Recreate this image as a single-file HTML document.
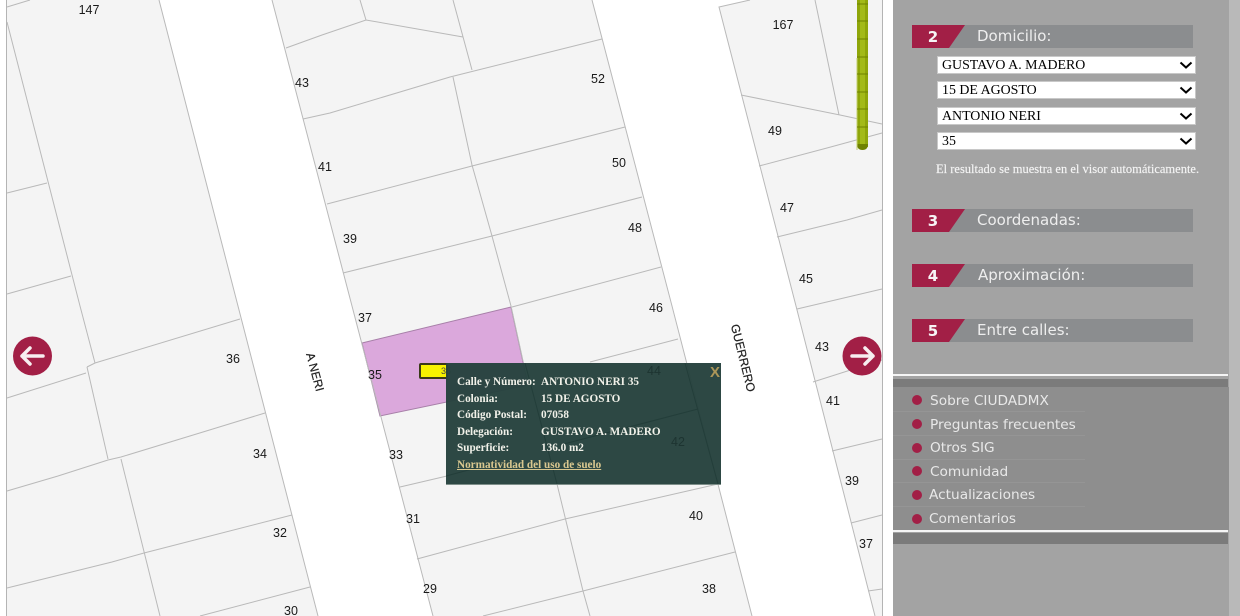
<!DOCTYPE html>
<html lang="es"><head><meta charset="utf-8"><title>CIUDADMX</title>
<style>
html,body{margin:0;padding:0;background:#fff}
body{width:1240px;height:616px;overflow:hidden;position:relative}
#map{position:absolute;left:0;top:0}
.side{position:absolute;left:893px;top:0;width:336px;height:616px;background:#a3a3a3}
.rt{position:absolute;left:1229px;top:0;width:11px;height:616px;background:#b9b9b9}
.abs{position:absolute}
.hd{position:absolute;left:912px;width:281px;height:23px;background:#8b8d8f}
.hd svg{position:absolute;left:0;top:0}
.hd b{position:absolute;left:0;width:42px;text-align:center;top:3px;font:bold 15px/18px "DejaVu Sans",sans-serif;color:#f7f3f5}
.hd span{position:absolute;left:65px;top:2px;font:15px/18px "DejaVu Sans",sans-serif;color:#eeeeee;white-space:nowrap}
.sel{position:absolute;left:937px;width:259px;height:18px;background:#fff;outline:1px solid #c8c8c8;outline-offset:-1px}
.sel select{appearance:none;-webkit-appearance:none;border:0;background:transparent;width:100%;height:18px;padding:1px 0 0 5px;margin:0;font:13.9px/17px "Liberation Serif",serif;color:#000;display:block;box-sizing:border-box}
.sel svg{position:absolute;right:3px;top:5px}
.note{position:absolute;left:936px;top:161px;font:12.5px/16px "Liberation Serif",serif;color:#f4f4f4;white-space:nowrap;-webkit-text-stroke:.15px #f4f4f4}
.menu{position:absolute;left:893px;top:387px;width:336px;height:143px;background:#8e8e8e}
.strip{position:absolute;left:893px;width:335px;background:#7b7b7b}
.wl{position:absolute;left:893px;width:335px;height:2px;background:#f5f5f5}
.dot{position:absolute;left:912px;width:10px;height:10px;border-radius:50%;background:#a21f46}
.mi{position:absolute;font:13.7px/18px "DejaVu Sans",sans-serif;color:#e8e8e8;white-space:nowrap}
.sep{position:absolute;left:893px;width:192px;height:1px;background:#959595}
.pop{position:absolute;left:446px;top:363px;width:275px;height:122px;background:rgba(38,66,62,.97);border-bottom:1px solid #7e8f8a;box-sizing:border-box}
.pop div{position:absolute;font:bold 11.2px/14px "Liberation Serif",serif;color:#f1f1e9;white-space:nowrap}
.pop a{color:#d9c78f;text-decoration:underline}
</style></head>
<body>
<svg id="map" width="893" height="616" viewBox="0 0 893 616" xmlns="http://www.w3.org/2000/svg">
<rect width="893" height="616" fill="#fff"/>
<g fill="#f4f4f4">
<polygon points="7,0 159,0 318,616 7,616"/>
<polygon points="272,0 592,0 752,616 433,616"/>
<polygon points="750,0 719,7 875,616 882,616 882,0"/>
</g>
<polygon points="362,343 511,307 528,385 380,416" fill="#dba8dc" stroke="#a77fa8" stroke-width="1"/>
<g fill="none" stroke="#b9b9b9" stroke-width="1">
<path d="M159,0L318,616M272,0L352,306L433,616M592,0L672,306L752,616M750,0L719,7L796,306L875,616"/>
<path d="M7,7L30,0M7,22L80,306L95,363M87,367L108,459M121,459L160,616"/>
<path d="M7,193L47,183M7,294L71,276M95,363L87,367M95,363L240,319M7,398L86,373M7,491L58,476L108,460L121,457L203,432L265,413M7,588L112,562L144,553L292,515M200,616L310,587"/>
<path d="M360,0L366,20M286,48L322,35L366,20L463,37M453,0L472,70M303,119L330,113L450,77L602,39M453,77L472,165L492,236L511,306L523,361M557,484L583,591L590,616"/>
<path d="M327,204L472,166L625,127M343,273L492,236L642,197M512,307L661,267M590,362L678,339M400,487L447,476M417,559L565,519L718,484M483,616L583,591L735,552"/>
<path d="M815,0L839,115M741,95L840,115L882,124M759,166L827,148L882,133M777,237L847,220L882,210M797,309L882,289M813,382L882,360M832,451L882,439M851,523L882,515M868,591L882,589"/>
</g>
<path d="M6.5,0V616M882.5,0V616" stroke="#b4b4b4" stroke-width="1"/>
<g font-family="Liberation Sans, sans-serif" font-size="12.5" fill="#1a1a1a" text-anchor="middle">
<text x="89" y="14">147</text><text x="302" y="87">43</text><text x="325" y="171">41</text><text x="350" y="243">39</text><text x="365" y="322">37</text><text x="375" y="379">35</text><text x="396" y="459">33</text><text x="413" y="523">31</text><text x="430" y="593">29</text>
<text x="598" y="83">52</text><text x="619" y="167">50</text><text x="635" y="232">48</text><text x="656" y="312">46</text><text x="696" y="520">40</text><text x="709" y="593">38</text>
<text x="233" y="363">36</text><text x="260" y="458">34</text><text x="280" y="537">32</text><text x="291" y="615">30</text>
<text x="783" y="29">167</text><text x="775" y="135">49</text><text x="787" y="212">47</text><text x="806" y="283">45</text><text x="822" y="351">43</text><text x="833" y="405">41</text><text x="852" y="485">39</text><text x="866" y="548">37</text>
<text transform="translate(315,372) rotate(75)" y="4" font-size="12" fill="#222" stroke="#222" stroke-width=".2">A NERI</text>
<text transform="translate(743,358) rotate(76)" y="4" font-size="12" fill="#222" stroke="#222" stroke-width=".2">GUERRERO</text>
</g>
<!-- zoom bar -->
<rect x="857" y="0" width="11" height="147" fill="#8fa60a"/>
<rect x="860" y="0" width="5" height="147" fill="#a3ba18"/>
<path d="M857,144Q857,150 862.500,150Q868,150 868,144Z" fill="#6f8200"/>
<rect x="856.500" y="58" width="1" height="92" fill="#c3d070"/>
<path d="M857,4H868M857,21H868M857,39H868M857,57H868M857,74H868M857,92H868M857,109H868M857,127H868" stroke="#6f8200" stroke-width="1"/>
<!-- arrows -->
<circle cx="32.500" cy="356" r="19.500" fill="#a21f46"/>
<path d="M43,356H22M30,348L22,356L30,364" fill="none" stroke="#f7eef0" stroke-width="3.500" stroke-linecap="round" stroke-linejoin="round"/>
<circle cx="862" cy="356" r="19.500" fill="#a21f46"/>
<path d="M852,356H873M865,348L873,356L865,364" fill="none" stroke="#f7eef0" stroke-width="3.500" stroke-linecap="round" stroke-linejoin="round"/>
<!-- tag -->
<rect x="420" y="364" width="27" height="14" rx="1" fill="#f7f200" stroke="#3a3a18" stroke-width="2"/>
<text x="441" y="374" font-family="Liberation Sans, sans-serif" font-size="9" fill="#444">35</text>
</svg>

<div class="pop">
<svg class="abs" style="left:0;top:0" width="275" height="121" fill="none" stroke="#233e3a" stroke-width="1"><path d="M79,0L111,121M239,0L272,121M252,46L114,82M0,113L30,105"/></svg>
<svg class="abs" style="left:0;top:0" width="275" height="121"><text x="208" y="12" font-family="Liberation Sans,sans-serif" font-size="12.500" fill="#1d3431" text-anchor="middle">44</text><text x="232" y="83" font-family="Liberation Sans,sans-serif" font-size="12.500" fill="#1d3431" text-anchor="middle">42</text></svg>
<div style="left:11px;top:12px">Calle y Número:</div><div style="left:95px;top:12px">ANTONIO NERI 35</div>
<div style="left:11px;top:29px">Colonia:</div><div style="left:95px;top:29px">15 DE AGOSTO</div>
<div style="left:11px;top:45px">Código Postal:</div><div style="left:95px;top:45px">07058</div>
<div style="left:11px;top:62px">Delegación:</div><div style="left:95px;top:62px">GUSTAVO A. MADERO</div>
<div style="left:11px;top:78px">Superficie:</div><div style="left:95px;top:78px">136.0 m2</div>
<div style="left:11px;top:95px"><a href="#">Normatividad del uso de suelo</a></div>
<div style="left:264px;top:2px;font:bold 15px/15px 'Liberation Sans',sans-serif;color:#ad9759">X</div>
</div>

<div class="side"></div><div class="rt"></div>

<div class="hd" style="top:25px"><svg width="54" height="23"><polygon points="0,0 53,0 37,23 0,23" fill="#a21f46"/></svg><b>2</b><span>Domicilio:</span></div>
<div class="sel" style="top:55.500px"><select><option>GUSTAVO A. MADERO</option></select><svg width="14" height="8"><path d="M1.500,1.500L7,6.500L12.500,1.500" fill="none" stroke="#000" stroke-width="2"/></svg></div>
<div class="sel" style="top:80.500px"><select><option>15 DE AGOSTO</option></select><svg width="14" height="8"><path d="M1.500,1.500L7,6.500L12.500,1.500" fill="none" stroke="#000" stroke-width="2"/></svg></div>
<div class="sel" style="top:106.500px"><select><option>ANTONIO NERI</option></select><svg width="14" height="8"><path d="M1.500,1.500L7,6.500L12.500,1.500" fill="none" stroke="#000" stroke-width="2"/></svg></div>
<div class="sel" style="top:131.500px"><select><option>35</option></select><svg width="14" height="8"><path d="M1.500,1.500L7,6.500L12.500,1.500" fill="none" stroke="#000" stroke-width="2"/></svg></div>
<div class="note">El resultado se muestra en el visor automáticamente.</div>

<div class="hd" style="top:209px"><svg width="54" height="23"><polygon points="0,0 53,0 37,23 0,23" fill="#a21f46"/></svg><b>3</b><span>Coordenadas:</span></div>
<div class="hd" style="top:264px"><svg width="54" height="23"><polygon points="0,0 53,0 37,23 0,23" fill="#a21f46"/></svg><b>4</b><span style="left:66px">Aproximación:</span></div>
<div class="hd" style="top:319px"><svg width="54" height="23"><polygon points="0,0 53,0 37,23 0,23" fill="#a21f46"/></svg><b>5</b><span>Entre calles:</span></div>

<div class="wl" style="top:374px"></div>
<div class="strip" style="top:379px;height:8px"></div>
<div class="menu"></div>
<div class="sep" style="top:411px"></div><div class="sep" style="top:435px"></div><div class="sep" style="top:459px"></div><div class="sep" style="top:482px"></div><div class="sep" style="top:506px"></div>
<div class="dot" style="top:395px"></div><div class="mi" style="left:930px;top:392px">Sobre CIUDADMX</div>
<div class="dot" style="top:419px"></div><div class="mi" style="left:930px;top:416px">Preguntas frecuentes</div>
<div class="dot" style="top:443px"></div><div class="mi" style="left:930px;top:439px">Otros SIG</div>
<div class="dot" style="top:466px"></div><div class="mi" style="left:930px;top:463px">Comunidad</div>
<div class="dot" style="top:490px"></div><div class="mi" style="left:929px;top:486px">Actualizaciones</div>
<div class="dot" style="top:514px"></div><div class="mi" style="left:929px;top:510px">Comentarios</div>
<div class="wl" style="top:530px"></div>
<div class="strip" style="top:533px;height:11px"></div>
</body></html>
